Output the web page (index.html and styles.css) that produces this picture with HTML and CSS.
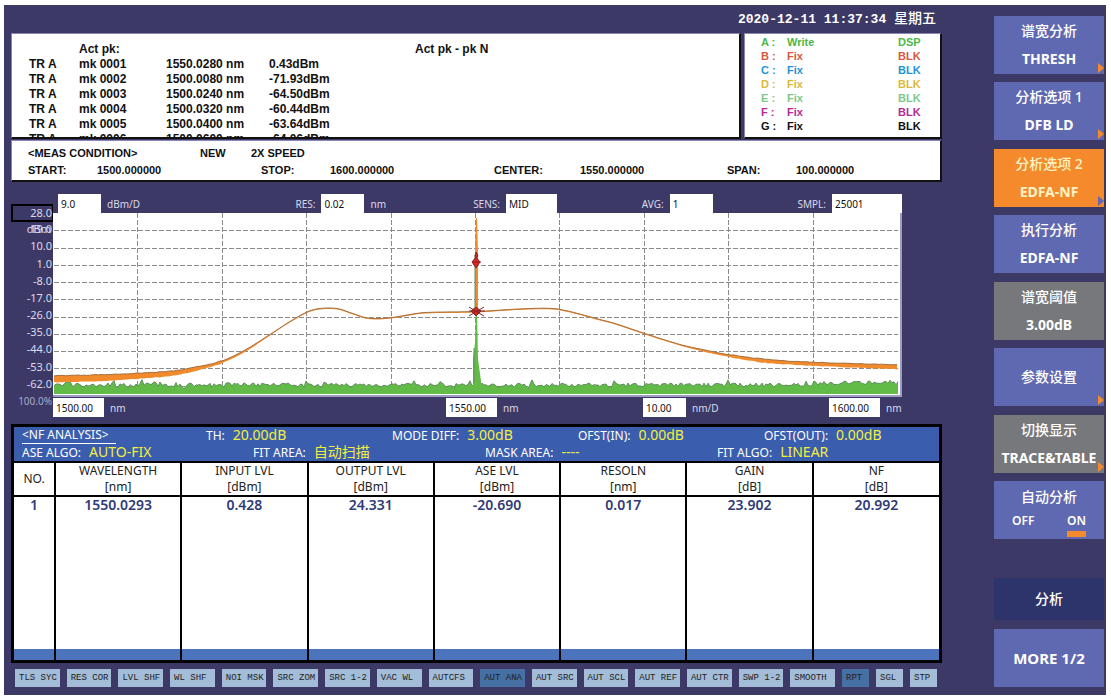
FILE: index.html
```
<!DOCTYPE html>
<html lang="zh-CN">
<head>
    <meta charset="UTF-8">
    <meta name="viewport" content="width=device-width, initial-scale=1.0">
    <title>光谱分析仪</title>
    <link rel="stylesheet" href="styles.css">
</head>

<body>
    <div class="screen">
        <main class="main">
            <header class="clock">2020-12-11 11:37:34 <span>星期五</span></header>

            <div class="top-panels">
                <section class="panel peaks">
                    <div class="peak-row"><span></span><span>Act pk:</span><span></span><span></span><span>Act pk - pk N</span></div>
                    <div class="peak-row"><span class="tr">TR A</span><span>mk 0001</span><span>1550.0280 nm</span><span>0.43dBm</span></div>
                    <div class="peak-row"><span class="tr">TR A</span><span>mk 0002</span><span>1500.0080 nm</span><span>-71.93dBm</span></div>
                    <div class="peak-row"><span class="tr">TR A</span><span>mk 0003</span><span>1500.0240 nm</span><span>-64.50dBm</span></div>
                    <div class="peak-row"><span class="tr">TR A</span><span>mk 0004</span><span>1500.0320 nm</span><span>-60.44dBm</span></div>
                    <div class="peak-row"><span class="tr">TR A</span><span>mk 0005</span><span>1500.0400 nm</span><span>-63.64dBm</span></div>
                    <div class="peak-row"><span class="tr">TR A</span><span>mk 0006</span><span>1500.0600 nm</span><span>-64.06dBm</span></div>
                </section>
                <section class="panel traces">
                    <div class="trace trace-a"><span>A :</span><span>Write</span><span>DSP</span></div>
                    <div class="trace trace-b"><span>B :</span><span>Fix</span><span>BLK</span></div>
                    <div class="trace trace-c"><span>C :</span><span>Fix</span><span>BLK</span></div>
                    <div class="trace trace-d"><span>D :</span><span>Fix</span><span>BLK</span></div>
                    <div class="trace trace-e"><span>E :</span><span>Fix</span><span>BLK</span></div>
                    <div class="trace trace-f"><span>F :</span><span>Fix</span><span>BLK</span></div>
                    <div class="trace trace-g"><span>G :</span><span>Fix</span><span>BLK</span></div>
                </section>
            </div>

            <section class="panel meas">
                <div class="meas-title"><span>&lt;MEAS CONDITION&gt;</span><span>NEW</span><span>2X SPEED</span></div>
                <div class="meas-values">
                    <div><span>START:</span><span>1500.000000</span></div>
                    <div><span>STOP:</span><span>1600.000000</span></div>
                    <div><span>CENTER:</span><span>1550.000000</span></div>
                    <div><span>SPAN:</span><span>100.000000</span></div>
                </div>
            </section>

            <section class="chart">
                <div class="axis">
                    <span class="ref-level">28.0</span>
                    <span>19.0</span>
                    <span>10.0</span>
                    <span>1.0</span>
                    <span>-8.0</span>
                    <span>-17.0</span>
                    <span>-26.0</span>
                    <span>-35.0</span>
                    <span>-44.0</span>
                    <span>-53.0</span>
                    <span>-62.0</span>
                    <span class="percent">100.0%</span>
                    <span class="axis-unit">dBm</span>
                </div>
                <div class="settings">
                    <label><input class="w-s" type="text" value="9.0">dBm/D</label>
                    <label>RES:<input class="w-s" type="text" value="0.02">nm</label>
                    <label>SENS:<input class="w-m" type="text" value="MID"></label>
                    <label>AVG:<input class="w-s" type="text" value="1"></label>
                    <label>SMPL:<input class="w-l" type="text" value="25001"></label>
                </div>
                <svg class="plot" viewBox="0 0 847 182" preserveAspectRatio="none">
                    <g id="grid"></g>
                    <path id="floor"></path>
                    <path id="floor-edge"></path>
                    <path class="green" d="M420 181 V146 L422 130 L423 98 H424 L425 146 L428 168 V181 Z"></path>
                    <path id="curve"></path>
                    <path id="curve-edge"></path>
                    <path class="orange" d="M423 5 H424 L425 40 V98 H422 V40 Z"></path>
                    <path class="shade" d="M422 42 V97 M421 135 V170"></path>
                    <g class="marker">
                        <path d="M423 39 l2 4 l-2 3 l-1 -3 z"></path>
                        <path d="M423 44 l4 5 l-4 6 l-4 -6 z"></path>
                        <path d="M419 49 h9"></path>
                        <path d="M423 94 l5 4 l-5 5 l-5 -5 z"></path>
                        <path d="M416 94 l15 9 M431 94 l-15 9 M416 98 h16"></path>
                    </g>
                </svg>
                <div class="span-row">
                    <label><input class="w-m" type="text" value="1500.00">nm</label>
                    <label><input class="w-m" type="text" value="1550.00">nm</label>
                    <label><input class="w-s" type="text" value="10.00">nm/D</label>
                    <label><input class="w-m" type="text" value="1600.00">nm</label>
                </div>
            </section>

            <section class="analysis">
                <div class="params five">
                    <div class="params-title">&lt;NF ANALYSIS&gt;</div>
                    <div>TH:<b>20.00dB</b></div>
                    <div>MODE DIFF:<b>3.00dB</b></div>
                    <div>OFST(IN):<b>0.00dB</b></div>
                    <div>OFST(OUT):<b>0.00dB</b></div>
                </div>
                <div class="params four">
                    <div>ASE ALGO:<b>AUTO-FIX</b></div>
                    <div>FIT AREA:<b>自动扫描</b></div>
                    <div>MASK AREA:<b>----</b></div>
                    <div>FIT ALGO:<b>LINEAR</b></div>
                </div>
                <table>
                    <thead>
                        <tr>
                            <th class="no">NO.</th>
                            <th>WAVELENGTH<br>[nm]</th>
                            <th>INPUT LVL<br>[dBm]</th>
                            <th>OUTPUT LVL<br>[dBm]</th>
                            <th>ASE LVL<br>[dBm]</th>
                            <th>RESOLN<br>[nm]</th>
                            <th>GAIN<br>[dB]</th>
                            <th>NF<br>[dB]</th>
                        </tr>
                    </thead>
                    <tbody>
                        <tr>
                            <td>1</td>
                            <td>1550.0293</td>
                            <td>0.428</td>
                            <td>24.331</td>
                            <td>-20.690</td>
                            <td>0.017</td>
                            <td>23.902</td>
                            <td>20.992</td>
                        </tr>
                    </tbody>
                    <tfoot>
                        <tr><td></td><td></td><td></td><td></td><td></td><td></td><td></td><td></td></tr>
                    </tfoot>
                </table>
            </section>

            <div class="status">
                <button>TLS SYC</button>
                <button>RES COR</button>
                <button>LVL SHF</button>
                <button>WL SHF</button>
                <button>NOI MSK</button>
                <button>SRC ZOM</button>
                <button>SRC 1-2</button>
                <button>VAC WL</button>
                <button>AUTCFS</button>
                <button class="on">AUT ANA</button>
                <button>AUT SRC</button>
                <button>AUT SCL</button>
                <button>AUT REF</button>
                <button>AUT CTR</button>
                <button>SWP 1-2</button>
                <button>SMOOTH</button>
                <button class="on">RPT</button>
                <button>SGL</button>
                <button>STP</button>
            </div>
        </main>

        <aside class="softkeys">
            <div class="softkey-list">
                <button class="softkey more"><span>谱宽分析</span><b>THRESH</b></button>
                <button class="softkey more"><span>分析选项 1</span><b>DFB LD</b></button>
                <button class="softkey more active"><span>分析选项 2</span><b>EDFA-NF</b></button>
                <button class="softkey"><span>执行分析</span><b>EDFA-NF</b></button>
                <button class="softkey gray"><span>谱宽阈值</span><b>3.00dB</b></button>
                <button class="softkey more"><span>参数设置</span></button>
                <button class="softkey more gray"><span>切换显示</span><b>TRACE&amp;TABLE</b></button>
                <button class="softkey"><span>自动分析</span><span class="toggle"><span>OFF</span><span class="selected">ON</span></span></button>
            </div>
            <button class="softkey title">分析</button>
            <button class="softkey"><b class="big">MORE 1/2</b></button>
        </aside>
    </div>

    <script src="chart.js"></script>
</body>
</html>
```
FILE: styles.css
```
* {
    box-sizing: border-box;
}
body {
    margin: 5px 5px 4px 4px;
    background: #fff;
    font-family: "Noto Sans", "Noto Sans CJK SC", sans-serif;
}
button, input {
    font-family: inherit;
    margin: 0;
    border: none;
}
.screen {
    display: flex;
    justify-content: space-between;
    gap: 52px;
    min-height: calc(100vh - 9px);
    padding: 0 2px 8px 7px;
    background: #3d3967;
}
.main {
    flex: 1;
    min-width: 0;
    display: flex;
    flex-direction: column;
}

/* clock */
.clock {
    height: 28px;
    padding-right: 6px;
    text-align: right;
    color: #fff;
    font: bold 13px/28px "Liberation Mono", "Noto Sans CJK SC", monospace;
}
.clock span {
    font-size: 14px;
    font-weight: 500;
}

/* white panels */
.panel {
    background: #fff;
    border: solid #111;
    border-width: 1px 2px 2px 1px;
    border-top-color: #8a86b4;
    border-left-color: #8a86b4;
    color: #111;
    font-family: "Liberation Sans", sans-serif;
    font-weight: bold;
}
.top-panels {
    display: flex;
    gap: 3px;
    height: 106px;
}
.peaks {
    flex: 1;
    padding: 8px 0 0 17px;
    font-size: 12px;
    line-height: 15px;
    overflow: hidden;
}
.peak-row {
    display: grid;
    grid-template-columns: 50px 87px 103px 146px 1fr;
}
.tr {
    font-size: 12px;
}
.traces {
    width: 198px;
    padding: 1px 0 0 16px;
    font-size: 11px;
    line-height: 14px;
}
.trace {
    display: grid;
    grid-template-columns: 26px 111px 1fr;
}
.trace-a { color: #4db748; }
.trace-b { color: #d9583f; }
.trace-c { color: #1f94d6; }
.trace-d { color: #dcb93c; }
.trace-e { color: #7cc98a; }
.trace-f { color: #b52a96; }
.trace-g { color: #111; }
.meas {
    height: 42px;
    margin-top: 1px;
    padding: 4px 0 0 16px;
    font-size: 11px;
    line-height: 17px;
}
.meas-title {
    display: grid;
    grid-template-columns: 172px 51px 1fr;
}
.meas-values {
    display: grid;
    grid-template-columns: 233fr 233fr 233fr 213fr;
}
.meas-values span:first-child {
    display: inline-block;
    min-width: 69px;
}
.meas-values div:nth-child(3) span:first-child {
    min-width: 86px;
}

/* chart */
.chart {
    display: grid;
    grid-template-columns: 42px 1fr;
    grid-template-rows: 19px 184px 20px;
    margin: 12px 40px 0 0;
    color: #d9daea;
    font-size: 10px;
}
.axis {
    grid-row: 1 / 4;
    position: relative;
    display: flex;
    flex-direction: column;
    justify-content: space-between;
    margin: 10px 0 8px;
    text-align: right;
    font-size: 11px;
    line-height: 16px;
}
.axis > span {
    padding-right: 1px;
}
.axis .ref-level {
    height: 18px;
    margin-bottom: -2px;
    border: 2px solid #000;
    border-right-width: 1px;
    padding-right: 0;
    line-height: 14px;
}
.axis .percent {
    color: #a9a8c8;
    font-size: 10px;
    white-space: nowrap;
}
.axis .axis-unit {
    position: absolute;
    top: 17px;
    right: 1px;
}
.settings, .span-row {
    display: grid;
    white-space: nowrap;
}
.settings {
    grid-template-columns: 238fr 178fr 169fr 156fr 103fr;
    padding-left: 5px;
}
.span-row {
    grid-template-columns: 393fr 197fr 186fr 73fr;
    padding-top: 1px;
}
.chart label {
    display: flex;
    align-items: center;
    gap: 6px;
}
.chart input {
    height: 100%;
    padding: 0 3px;
    background: #fff;
    color: #111;
    font-size: 10px;
}
.w-s { width: 43px; }
.w-m { width: 51px; }
.w-l { width: 70px; }
.plot {
    display: block;
    width: 100%;
    height: 184px;
    background: #fff;
    border: solid #9c9dc0;
    border-width: 0 2px 2px 0;
}
#grid path {
    stroke: #8b8b8b;
    stroke-width: 1;
    stroke-dasharray: 5 2;
}
#floor, .green { fill: #62bb46; }
#floor-edge, .shade { fill: none; stroke: #5f8f5c; stroke-width: 1; }
#curve, .orange { fill: #f18a2b; }
#curve-edge { fill: none; stroke: #a8713f; stroke-width: 1; }
.marker path {
    fill: #e2231a;
    stroke: #7d2a2a;
    stroke-width: 1;
}

/* analysis table */
.analysis {
    margin-top: 7px;
    border: 3px solid #000;
    background: #3a5dae;
    color: #fff;
}
.params {
    display: grid;
    padding-left: 8px;
    font-size: 12px;
    line-height: 16px;
    white-space: nowrap;
}
.five { grid-template-columns: 184fr 186fr 186fr 186fr 175fr; }
.four { grid-template-columns: 231fr 232fr 232fr 222fr; }
.params b {
    margin-left: 8px;
    color: #f4ee3c;
    font-size: 14px;
    font-weight: normal;
}
.params-title {
    width: 94px;
    border-bottom: 1px solid #fff;
}
table {
    width: 100%;
    border-collapse: collapse;
    table-layout: fixed;
    border-top: 2px solid #000;
    background: #fff;
    color: #222;
}
.no {
    width: 41px;
}
th {
    height: 34px;
    padding: 0;
    border-bottom: 2px solid #000;
    font-size: 12px;
    font-weight: normal;
    line-height: 16px;
}
td {
    height: 153px;
    padding: 0;
    vertical-align: top;
    text-align: center;
    color: #2f3b77;
    font-size: 14px;
    font-weight: 600;
    line-height: 16px;
}
th + th, td + td {
    border-left: 2px solid #000;
}
tfoot td {
    height: 11px;
    background: #4c74bd;
}

/* status bar */
.status {
    display: grid;
    grid-template-columns: repeat(16, 1fr) repeat(3, 27px);
    gap: 7px;
    margin: auto 5px 0 4px;
}
.status button {
    height: 18px;
    padding: 0 0 0 4px;
    background: #a3bcd8;
    color: #222;
    font: 9px/18px "Liberation Mono", monospace;
    text-align: left;
    white-space: nowrap;
}
.status .on {
    background: #466fa3;
}

/* softkeys */
.softkeys {
    width: 110px;
    display: flex;
    flex-direction: column;
    padding-top: 11px;
}
.softkey-list {
    flex: 1;
    display: flex;
    flex-direction: column;
    justify-content: space-between;
}
.softkey {
    position: relative;
    display: flex;
    flex-direction: column;
    align-items: center;
    justify-content: center;
    width: 100%;
    height: 58px;
    padding: 0;
    background: #5f69b1;
    color: #fff;
    font-size: 14px;
    font-weight: 500;
    line-height: 28px;
}
.softkey b {
    font-weight: 700;
}
.softkey .big {
    font-size: 15px;
}
.softkey.gray { background: #77787b; }
.softkey.active { background: #f58a2c; color: #fdf3c4; }
.softkey.title {
    height: 42px;
    margin: 39px 0 9px;
    background: #2d336b;
}
.softkey.more::after {
    content: "";
    position: absolute;
    right: 0;
    bottom: 1px;
    border-left: 6px solid #f58a2c;
    border-top: 5px solid transparent;
    border-bottom: 5px solid transparent;
}
.softkey.active::after {
    border-left-color: #5f69b1;
}
.toggle {
    display: flex;
    justify-content: space-between;
    width: 74px;
    font-size: 12px;
    font-weight: 600;
    line-height: 20px;
}
.selected {
    border-bottom: 6px solid #f58a2c;
}
```
FILE: chart.js
```
var grid = document.getElementById("grid");

function addLine(d) {
    var path = document.createElementNS("http://www.w3.org/2000/svg", "path");
    path.setAttribute("d", d);
    grid.appendChild(path);
}

for (var i = 1; i < 10; i++) {
    addLine("M" + (Math.round(i * 84.4) + 0.5) + " 0 V181");
}
for (var j = 1; j < 11; j++) {
    addLine("M1 " + (Math.round(j * 17.25) + 0.5) + " H845");
}

// same noise on every load
var seed = 7;
function rand() {
    seed = (seed * 16807) % 2147483647;
    return seed / 2147483647;
}

// noise floor
var floor = [];
for (var x = 1; x <= 845; x += 2) {
    var y = 174 - rand() * 4 - (rand() > 0.88 ? rand() * 4 : 0) + (rand() > 0.9 ? 2 : 0);
    if (x > 760) y -= 2;
    floor.push(x + " " + y.toFixed(1));
}
document.getElementById("floor").setAttribute("d", "M1 181 L" + floor.join(" L") + " L845 181 Z");
document.getElementById("floor-edge").setAttribute("d", "M" + floor.join(" L"));

// ASE curve: x, y, thickness
var points = [
    [1, 166, 6], [47, 165, 6], [85, 163, 5], [122, 160, 4], [147, 155, 3], [169, 149, 2],
    [192, 138, 2], [217, 122, 1], [237, 109, 1], [255, 99, 1], [267, 96, 1], [284, 96, 1],
    [297, 100, 1], [312, 105, 1], [324, 106, 1], [339, 105, 1], [357, 102, 1], [372, 100, 1],
    [423, 99, 1], [457, 97, 1], [477, 96, 1], [500, 96, 1], [517, 99, 1], [547, 107, 1],
    [562, 111, 1], [592, 121, 1], [627, 132, 1], [652, 138, 2], [677, 143, 2], [712, 148, 3],
    [760, 151, 3], [845, 154, 4]
];

function slope(n) {
    var p = points[Math.max(n - 1, 0)], q = points[Math.min(n + 1, points.length - 1)];
    return (q[1] - p[1]) / (q[0] - p[0]);
}

var upper = [], lower = [];
for (var k = 0; k < points.length - 1; k++) {
    var a = points[k], b = points[k + 1], w = b[0] - a[0];
    for (var px = a[0]; px < b[0]; px += 3) {
        var t = (px - a[0]) / w, t2 = t * t, t3 = t2 * t;
        var half = (a[2] + (b[2] - a[2]) * t) / 2;
        var py = (2 * t3 - 3 * t2 + 1) * a[1] + (t3 - 2 * t2 + t) * w * slope(k) +
            (3 * t2 - 2 * t3) * b[1] + (t3 - t2) * w * slope(k + 1);
        var n = half > 1 ? rand() : 0;
        upper.push(px + " " + (py - half - n * 0.6).toFixed(1));
        lower.unshift(px + " " + (py + half + n * 0.6).toFixed(1));
    }
}
document.getElementById("curve").setAttribute("d", "M" + upper.join(" L") + " L" + lower.join(" L") + " Z");
document.getElementById("curve-edge").setAttribute("d", "M" + upper.join(" L"));
```
